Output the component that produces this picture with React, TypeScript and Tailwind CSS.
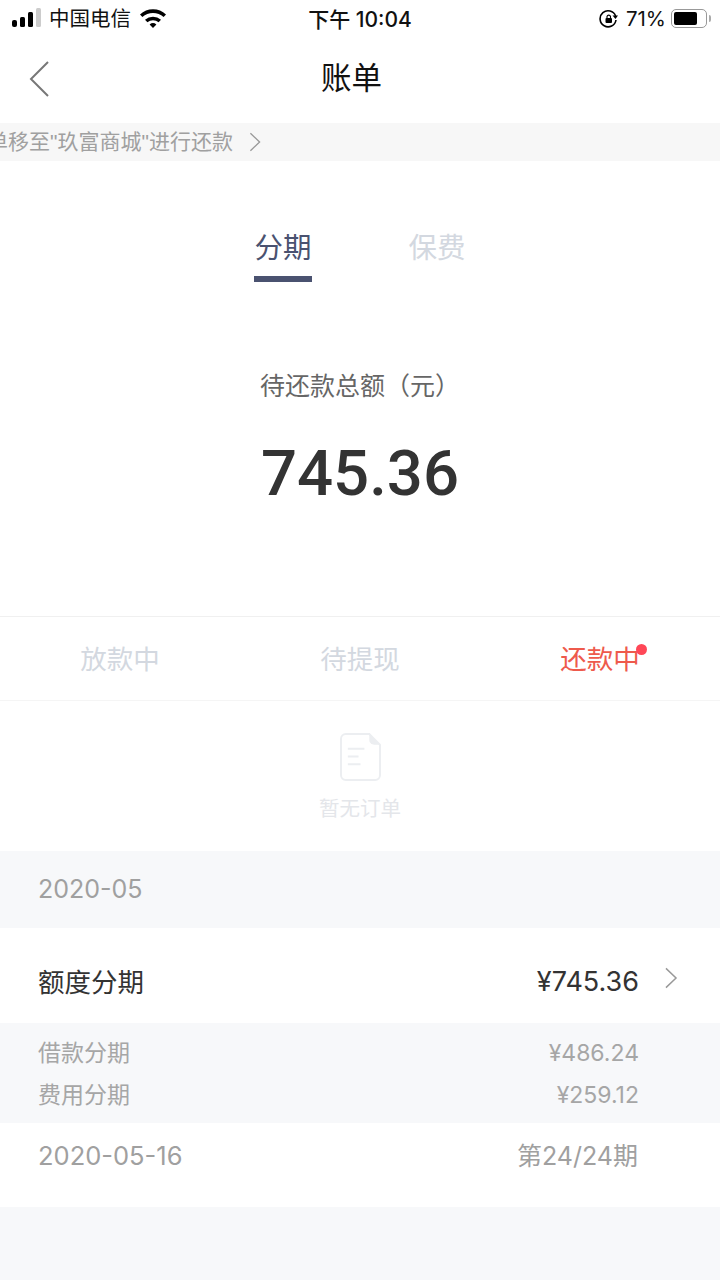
const CJK = "font-['Inter','Noto_Sans_CJK_SC',sans-serif]";

function Chevron({ className }: { className: string }) {
  return (
    <svg viewBox="0 0 14 24" fill="none" className={className}>
      <path d="M1.5 1.5 12.5 12 1.5 22.5" stroke="currentColor" strokeWidth="1.6" />
    </svg>
  );
}

function StatusBar() {
  return (
    <div className="relative flex h-10 items-center justify-between pl-3 pr-[9px] text-[#111]">
      <div className="flex items-center">
        <svg width="30" height="20" viewBox="0 0 30 20" className="mt-[-4px]">
          <rect x="0" y="12" width="5" height="7" rx="2" fill="#000" />
          <rect x="8" y="9" width="5" height="10" rx="1.5" fill="#000" />
          <rect x="16" y="4" width="5" height="15" rx="1.5" fill="#000" />
          <rect x="24" y="0" width="5" height="19" rx="1.5" fill="#ccc" />
        </svg>
        <span className="ml-[7px] mt-[-2px] text-[20.5px] leading-none">中国电信</span>
        <svg width="28" height="20" viewBox="0 0 28 20" className="ml-[8px] mt-[-4px]">
          <path d="M1 6.5a19 19 0 0 1 26 0l-2.4 2.6a15.6 15.6 0 0 0-21.2 0Z" fill="#000" />
          <path d="M6 11.7a12 12 0 0 1 16 0l-2.4 2.6a8.5 8.5 0 0 0-11.2 0Z" fill="#000" />
          <path d="M10.6 16.4a5.2 5.2 0 0 1 6.8 0L14 20Z" fill="#000" />
        </svg>
      </div>
      <span className="absolute left-0 right-0 mt-[-2px] text-center text-[21px] font-medium leading-none">下午 10:04</span>
      <div className="flex items-center">
        <svg width="20" height="20" viewBox="0 0 20 20" className="mt-[-3px]">
          <path d="M16.6 7a8 8 0 1 0 .4 4" fill="none" stroke="#000" strokeWidth="1.6" />
          <path d="M13.5 6.5h5.5L16.5 10Z" fill="#000" />
          <rect x="6.5" y="9" width="6.5" height="5" rx="1" fill="#000" />
          <path d="M8 9V7.5a1.8 1.8 0 0 1 3.5 0V9" fill="none" stroke="#000" strokeWidth="1.1" />
        </svg>
        <span className="ml-[7px] mt-[-2px] text-[20.5px] leading-none">71%</span>
        <div className="ml-[5px] mt-[-3px] flex h-[19px] w-[36px] items-center rounded-[5px] border-[1.5px] border-[#999] p-[2px]">
          <div className="h-full w-[23px] rounded-[2px] bg-black" />
        </div>
        <div className="ml-[2px] mt-[-3px] h-[7px] w-[2px] rounded-r bg-[#aaa]" />
      </div>
    </div>
  );
}

function Tab({ label, active }: { label: string; active?: boolean }) {
  return (
    <div className="flex w-[58px] flex-col items-center">
      <span className={`text-[28.5px] leading-[40px] whitespace-nowrap ${active ? "text-[#4a5270]" : "text-[#d3d8e0]"}`}>{label}</span>
      <div className={`mt-[8px] h-[6px] w-[58px] ${active ? "bg-[#4a5270]" : ""}`} />
    </div>
  );
}

export default function App() {
  return (
    <div className={`h-[1280px] w-[720px] overflow-hidden bg-[#f7f8fa] ${CJK}`}>
      <div className="bg-white">
        <StatusBar />
        <div className="relative flex h-[83px] items-center justify-center pb-[6px] pr-[17px]">
          <svg width="20" height="36" viewBox="0 0 20 36" fill="none" className="absolute left-[29px] top-[21px]">
            <path d="M19 1 2 18l17 17" stroke="#777" strokeWidth="2" />
          </svg>
          <span className="text-[30.5px] leading-none text-[#111]">账单</span>
        </div>
        <div className="flex h-[38px] items-center overflow-hidden bg-[#f7f7f7] font-['Liberation_Sans','Noto_Sans_CJK_SC',sans-serif] text-[21px] whitespace-nowrap text-[#a0a0a0]">
          <span className="ml-[-13px]">单移至"玖富商城"进行还款</span>
          <Chevron className="ml-[16px] h-[20px] w-[12px] text-[#999]" />
        </div>

        <div className="flex h-[456px] flex-col items-center border-b border-[#f0f0f0]">
          <div className="mt-[67px] flex gap-[96px]">
            <Tab label="分期" active />
            <Tab label="保费" />
          </div>
          <p className="mt-[84px] text-[25px] leading-[40px] text-[#666]">待还款总额（元）</p>
          <p className="mt-[32px] font-['Roboto',sans-serif] text-[63.5px] leading-[72px] font-[550] text-[#333]">745.36</p>
        </div>

        <div className="grid h-[84px] grid-cols-3 items-center border-b border-[#f5f5f5] pt-[2px] text-center text-[26.5px] text-[#d3d8e0]">
          <span>放款中</span>
          <span>待提现</span>
          <span className="relative mx-auto text-[#ee5a4c]">
            还款中
            <span className="absolute right-[-7px] top-[4px] h-[11px] w-[11px] rounded-full bg-[#ff4757]" />
          </span>
        </div>

        <div className="flex h-[150px] flex-col items-center pt-[32px]">
          <svg width="41" height="48" viewBox="0 0 42 49" fill="none">
            <path d="M6 1h24l11 11v31a5 5 0 0 1-5 5H6a5 5 0 0 1-5-5V6a5 5 0 0 1 5-5Z" stroke="#eceef1" strokeWidth="2" />
            <path d="M30 1v6a5 5 0 0 0 5 5h6Z" fill="#eceef1" />
            <path d="M8 16h17M8 24h11M8 32h13" stroke="#eceef1" strokeWidth="2" />
          </svg>
          <span className="mt-[14px] text-[20.5px] leading-[28px] text-[#e4e6ea]">暂无订单</span>
        </div>
      </div>

      <div className="flex h-[77px] items-center px-[38px] text-[25px] text-[#a0a0a0]">2020-05</div>

      <div className="flex h-[95px] items-center justify-between bg-white pl-[38px] pr-[42px] pt-[14px] text-[26.5px] text-[#333]">
        <span>额度分期</span>
        <div className="flex items-center">
          <span className="text-[27px]">¥745.36</span>
          <Chevron className="ml-[25px] mt-[-9px] h-[22px] w-[14px] text-[#999]" />
        </div>
      </div>

      <div className="flex h-[100px] flex-col justify-center gap-[14px] pl-[38px] pr-[81px] pt-[2px] text-[23px] leading-[28px] text-[#a6a6a6]">
        <div className="flex justify-between">
          <span>借款分期</span>
          <span>¥486.24</span>
        </div>
        <div className="flex justify-between">
          <span>费用分期</span>
          <span>¥259.12</span>
        </div>
      </div>

      <div className="flex h-[84px] items-start justify-between bg-white pl-[38px] pr-[82px] pt-[15px] text-[25px] leading-[36px] text-[#a0a0a0]">
        <span className="text-[25.5px]">2020-05-16</span>
        <span>第24/24期</span>
      </div>
    </div>
  );
}
